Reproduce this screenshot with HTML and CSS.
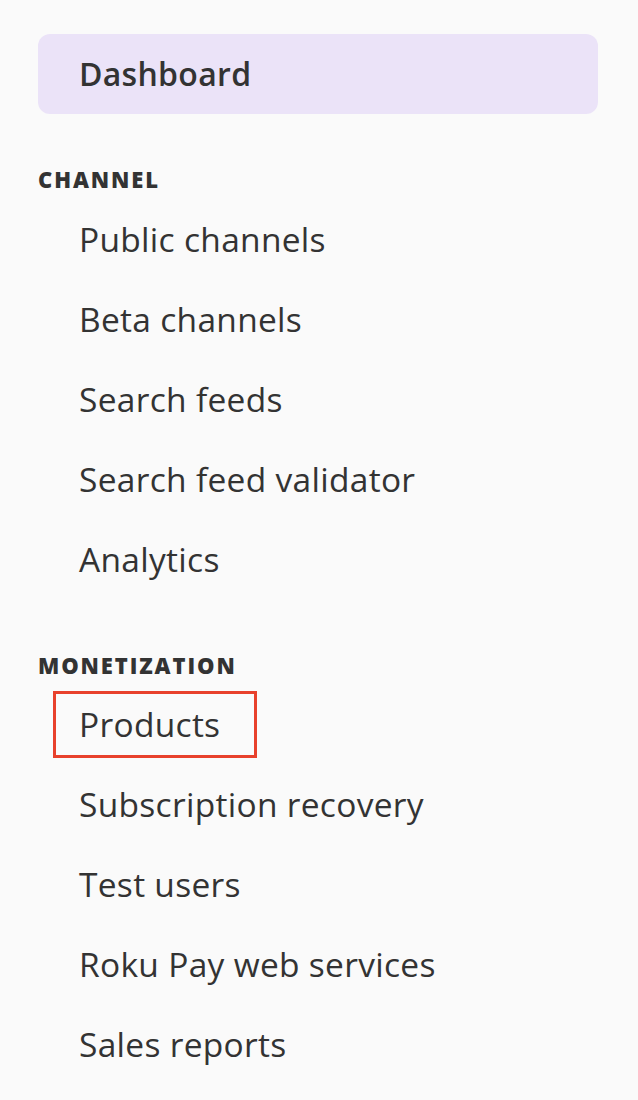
FILE: index.html
```html
<!DOCTYPE html>
<html>
<head>
<meta charset="utf-8">
<link rel="stylesheet" href="styles.css">
</head>
<body>
<nav class="sidebar">
  <a class="nav-item nav-item--active">Dashboard</a>
  <div class="section-label section-label--first">CHANNEL</div>
  <a class="nav-item">Public channels</a>
  <a class="nav-item">Beta channels</a>
  <a class="nav-item">Search feeds</a>
  <a class="nav-item">Search feed validator</a>
  <a class="nav-item">Analytics</a>
  <div class="section-label">MONETIZATION</div>
  <a class="nav-item nav-item--highlight"><span class="highlight-box"></span>Products</a>
  <a class="nav-item">Subscription recovery</a>
  <a class="nav-item">Test users</a>
  <a class="nav-item">Roku Pay web services</a>
  <a class="nav-item">Sales reports</a>
</nav>
</body>
</html>
```

FILE: styles.css
```css
html, body {
  margin: 0;
  padding: 0;
  background: #fafafa;
}
body {
  font-family: "Open Sans", "Liberation Sans", sans-serif;
  color: #333333;
}
.sidebar {
  display: flex;
  flex-direction: column;
  padding: 34px 40px 0 38px;
}
.nav-item {
  position: relative;
  display: flex;
  align-items: center;
  height: 80px;
  padding-left: 41px;
  padding-bottom: 5px;
  font-size: 33.5px;
  letter-spacing: 0.3px;
  color: #333333;
  box-sizing: border-box;
}
.nav-item--active {
  background: #ebe3f8;
  border-radius: 12px;
  font-weight: 600;
  font-size: 32px;
  padding-bottom: 2px;
}
.section-label {
  font-size: 22px;
  font-weight: 800;
  line-height: 22px;
  letter-spacing: 1.9px;
  color: #333333;
  margin-top: 53px;
  margin-bottom: 10px;
}
.section-label--first {
  margin-top: 54px;
  margin-bottom: 11px;
}
.highlight-box {
  position: absolute;
  left: 15px;
  top: 5px;
  width: 204px;
  height: 67px;
  border: 3px solid #e8412c;
  box-sizing: border-box;
}
```
